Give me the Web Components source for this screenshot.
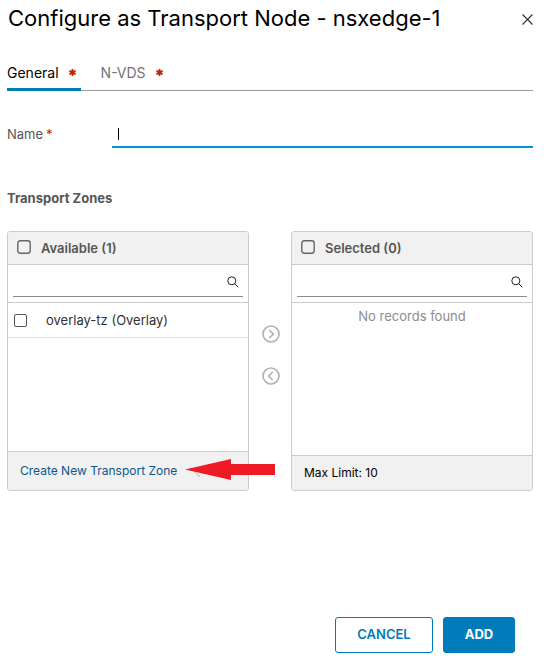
<!DOCTYPE html>
<html lang="en">
<head>
<meta charset="utf-8">
<meta name="viewport" content="width=device-width, initial-scale=1">
<title>Configure as Transport Node</title>
<style>
  html { background: #fff; }
  body { margin: 0; font: 13px/20px Inter, "Open Sans", sans-serif; color: #313131; }
</style>
</head>
<body>
<node-dialog heading="Configure as Transport Node - nsxedge-1">
  <tab-bar></tab-bar>
  <name-field></name-field>
  <zone-picker></zone-picker>
  <dialog-actions slot="footer"></dialog-actions>
</node-dialog>

<script>
const base = `
  *, *::before, *::after { box-sizing: border-box; }
  button, input { font: inherit; color: inherit; margin: 0; padding: 0; border: 0; border-radius: 0; background: none; outline: none; appearance: none; }
  button { cursor: pointer; }
  svg { display: block; }
`;
const define = (name, render) => customElements.define(name, class extends HTMLElement {
  connectedCallback() {
    if (this.shadowRoot) return;
    const root = this.attachShadow({ mode: 'open' });
    const t = document.createElement('template');
    t.innerHTML = `<style>${base}</style>` + render(this);
    root.append(t.content.cloneNode(true));
  }
});

define('required-star', () => `
  <style>:host { display: block; color: #c92100; margin-top: -2px; }</style>
  <svg width="7" height="7" viewBox="0 0 7 7" role="img" aria-label="required"><path d="M2.6 0H4.4V1.7L6.2 1L7 2.4L5.5 3.5L7 4.6L6.2 6L4.4 5.3V7H2.6V5.3L.8 6L0 4.6L1.5 3.5L0 2.4L.8 1L2.6 1.7Z" fill="currentColor"/></svg>`);

define('node-dialog', el => `
  <style>
    :host { display: flex; flex-direction: column; min-height: 100vh; padding: 0 13px 15px 7px; box-sizing: border-box; }
    header { display: flex; justify-content: space-between; align-items: flex-start; height: 36px; }
    h1 { margin: 0 0 0 1px; font-size: 22px; line-height: 36px; font-weight: 400; color: #000; white-space: nowrap; }
    .close { color: #313131; padding-top: 14px; }
    main { flex: 1; }
  </style>
  <header><h1>${el.getAttribute('heading')}</h1>
    <button class="close" aria-label="Close"><svg width="11" height="11" viewBox="0 0 11 11"><path d="M.5.5l10 10M10.5.5l-10 10" stroke="currentColor" stroke-width="1.1"/></svg></button>
  </header>
  <main><slot></slot></main>
  <slot name="footer"></slot>`);

define('tab-bar', () => `
  <style>
    :host { display: block; margin-top: 19px; }
    nav { display: flex; gap: 20px; height: 36px; box-shadow: inset 0 -1px #9a9a9a; }
    button { display: flex; align-items: center; gap: 10px; height: 36px; padding: 0 5px 0 0; color: #737373; font-size: 14px; }
    button[aria-selected=true] { color: #000; box-shadow: inset 0 -3px #007cbb; }
  </style>
  <nav role="tablist">
    <button role="tab" aria-selected="true">General<required-star></required-star></button>
    <button role="tab" aria-selected="false">N-VDS<required-star></required-star></button>
  </nav>`);

define('name-field', () => `
  <style>
    :host { display: grid; grid-template-columns: 105px 1fr; margin-top: 29px; }
    label { line-height: 28px; color: #565656; }
    label span { color: #c92100; margin-left: 3px; }
    input { width: 100%; height: 28px; padding: 0 6px; border-bottom: 2px solid #0094d2; caret-color: transparent;
      background: linear-gradient(#000, #000) 6px 8px / 1px 12px no-repeat; }
  </style>
  <label for="name">Name<span>*</span></label><input id="name" type="text" required>`);

define('zone-list', el => `
  <style>
    :host { display: flex; flex-direction: column; height: 260px; position: relative; min-width: 0; border: 1px solid #ccc; border-radius: 3px; }
    .head { display: flex; align-items: center; gap: 10px; height: 33px; padding-left: 9px; background: #f1f1f1; border-bottom: 1px solid #ccc; border-radius: 2px 2px 0 0; color: #565656; font-weight: 600; line-height: 32px; }
    .head svg { fill: none; stroke: #666; stroke-width: 1.4; }
    .box { display: grid; width: 14px; height: 14px; margin-top: -2px; }
    .box > * { grid-area: 1 / 1; width: 14px; height: 14px; }
    .search { height: 38px; padding: 0 5px; border-bottom: 1px solid #ccc; }
    .search div { display: flex; align-items: center; height: 32px; border-bottom: 1px solid #8c8c8c; padding-right: 4px; }
    .search input { flex: 1; min-width: 0; height: 30px; }
    .search button { padding-top: 2px; }
    .body { flex: 1; }
    .foot { height: var(--foot); border-top: 1px solid #ccc; background: #f1f1f1; border-radius: 0 0 2px 2px; padding-left: 12px; font-size: 12px; line-height: calc(var(--foot) - 1px); }
  </style>
  <div class="head"><span class="box"><svg viewBox="0 0 14 14"><rect x=".8" y=".8" width="12.4" height="12.4" rx="2.4"/></svg><input type="checkbox" id="all"></span><label for="all">${el.getAttribute('label')}</label></div>
  <div class="search"><div><input type="search" aria-label="Search"><button aria-label="Search">
    <svg width="12" height="12" viewBox="0 0 12 12" fill="none" stroke="#222"><circle cx="4.8" cy="4.8" r="4"/><path d="M7.8 7.8L11.3 11.3"/></svg></button></div></div>
  <div class="body"><slot></slot></div>
  <div class="foot"><slot name="foot"></slot></div>
  <slot name="callout"></slot>`);

define('zone-item', () => `
  <style>
    :host { display: flex; align-items: center; gap: 19px; height: 35px; padding-left: 6px; border-bottom: 1px solid #ddd; color: #313131; }
    input { width: 13px; height: 13px; border: 1px solid #555; border-radius: 2px; }
  </style>
  <input type="checkbox" id="pick"><label for="pick"><slot></slot></label>`);

define('callout-arrow', () => `
  <style>:host { position: absolute; right: -27px; bottom: 9px; pointer-events: none; }</style>
  <svg width="90" height="23" viewBox="0 0 90 23"><path d="M16 9L10 14L15 19" fill="none" stroke="#ccc" stroke-width="1.5"/><path d="M0 11.5L46 1V6H90V17H46V22Z" fill="#ed1c24"/></svg>`);

define('zone-picker', () => `
  <style>
    :host { display: block; margin-top: 40px; }
    h2 { margin: 0 0 23px; font-size: 13px; line-height: 20px; font-weight: 700; color: #565656; }
    .lists { display: grid; grid-template-columns: 1fr 42px 1fr; }
    .moves { display: flex; flex-direction: column; align-items: center; gap: 24px; padding: 94px 0 0 2px; }
    p { margin: 3px 0 0; text-align: center; color: #8c8c8c; }
    a { color: #0f568a; text-decoration: none; }
    .limit { color: #000; }
  </style>
  <h2>Transport Zones</h2>
  <div class="lists">
    <zone-list label="Available (1)" style="--foot: 39px">
      <zone-item>overlay-tz (Overlay)</zone-item>
      <a slot="foot" href="#">Create New Transport Zone</a>
      <callout-arrow slot="callout"></callout-arrow>
    </zone-list>
    <div class="moves">
      <button aria-label="Add to selected"><svg width="18" height="18" viewBox="0 0 18 18" fill="none" stroke="#b3b3b3" stroke-width="1.7"><circle cx="9" cy="9" r="8"/><path d="M7.3 5L11.3 9L7.3 13"/></svg></button>
      <button aria-label="Remove from selected"><svg width="18" height="18" viewBox="0 0 18 18" fill="none" stroke="#b3b3b3" stroke-width="1.7"><circle cx="9" cy="9" r="8"/><path d="M10.7 5L6.7 9L10.7 13"/></svg></button>
    </div>
    <zone-list label="Selected (0)" style="--foot: 35px">
      <p>No records found</p>
      <span class="limit" slot="foot">Max Limit: 10</span>
    </zone-list>
  </div>`);

define('dialog-actions', () => `
  <style>
    :host { display: flex; justify-content: flex-end; gap: 10px; padding-right: 18px; }
    button { height: 36px; min-width: 72px; padding: 0 18px 2px; border: 1px solid #007cbb; border-radius: 3px; color: #007cbb; font-size: 13px; font-weight: 600; }
    .cancel { min-width: 98px; }
    .add { background: #007cbb; color: #fff; font-weight: 700; }
  </style>
  <button class="cancel">CANCEL</button><button class="add">ADD</button>`);
</script>
</body>
</html>
